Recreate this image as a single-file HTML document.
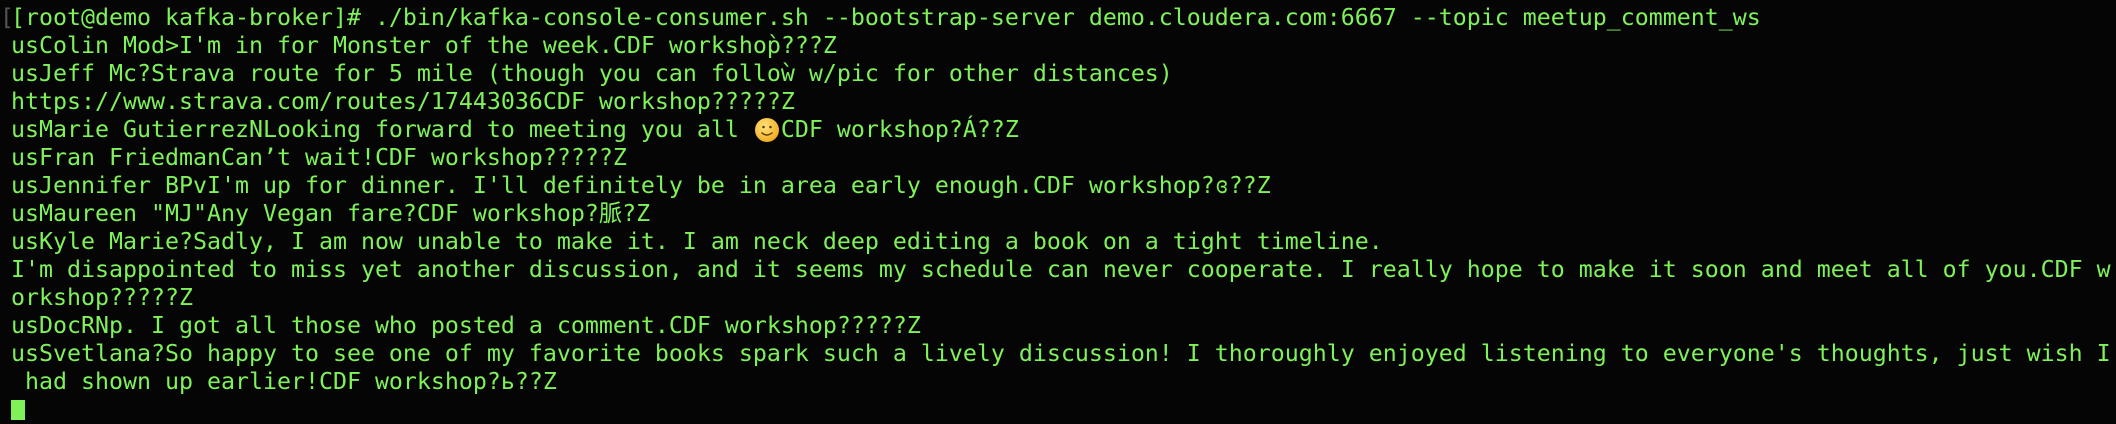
<!DOCTYPE html>
<html><head><meta charset="utf-8"><style>
html,body{margin:0;padding:0;background:#050505;width:2116px;height:412px;overflow:hidden}
pre{margin:0;position:absolute;left:11px;top:4px;font-family:"DejaVu Sans Mono","Noto Sans CJK SC",monospace;font-size:23.25px;line-height:28px;color:#7ff25a;white-space:pre}
.dim{position:absolute;left:0;top:4px;font-family:"DejaVu Sans Mono",monospace;font-size:23.25px;line-height:28px;color:#555}
.emo{display:inline-block;width:28px;height:28px;vertical-align:top;position:relative}
.emo svg{position:absolute;left:1px;top:1px}
.cur{display:inline-block;width:14px;height:20px;background:#7ff25a;vertical-align:top;margin-top:4px}
</style></head><body>
<div class="dim">[</div>
<pre>[root@demo kafka-broker]# ./bin/kafka-console-consumer.sh --bootstrap-server demo.cloudera.com:6667 --topic meetup_comment_ws
usColin Mod&gt;I'm in for Monster of the week.CDF workshop&#768;???Z
usJeff Mc?Strava route for 5 mile (though you can follow&#768; w/pic for other distances)
https://www.strava.com/routes/17443036CDF workshop?????Z
usMarie GutierrezNLooking forward to meeting you all <span class="emo"><svg width="26" height="26" viewBox="0 0 26 26"><defs><radialGradient id="g" cx="0.4" cy="0.35" r="0.7"><stop offset="0" stop-color="#ffe27a"/><stop offset="1" stop-color="#f2a91c"/></radialGradient></defs><circle cx="13" cy="13" r="12" fill="url(#g)"/><circle cx="9.5" cy="10" r="1.3" fill="#5a3a10"/><circle cx="16.5" cy="10" r="1.3" fill="#5a3a10"/><path d="M7.5 15.5 Q13 20.5 18.5 15.5" stroke="#5a3a10" stroke-width="1.4" fill="none"/></svg></span>CDF workshop?Á??Z
usFran FriedmanCan’t wait!CDF workshop?????Z
usJennifer BPvI'm up for dinner. I'll definitely be in area early enough.CDF workshop?ɞ??Z
usMaureen "MJ"Any Vegan fare?CDF workshop?脈?Z
usKyle Marie?Sadly, I am now unable to make it. I am neck deep editing a book on a tight timeline.
I'm disappointed to miss yet another discussion, and it seems my schedule can never cooperate. I really hope to make it soon and meet all of you.CDF w
orkshop?????Z
usDocRNp. I got all those who posted a comment.CDF workshop?????Z
usSvetlana?So happy to see one of my favorite books spark such a lively discussion! I thoroughly enjoyed listening to everyone's thoughts, just wish I
 had shown up earlier!CDF workshop?ь??Z
<span class="cur"></span></pre>
</body></html>
